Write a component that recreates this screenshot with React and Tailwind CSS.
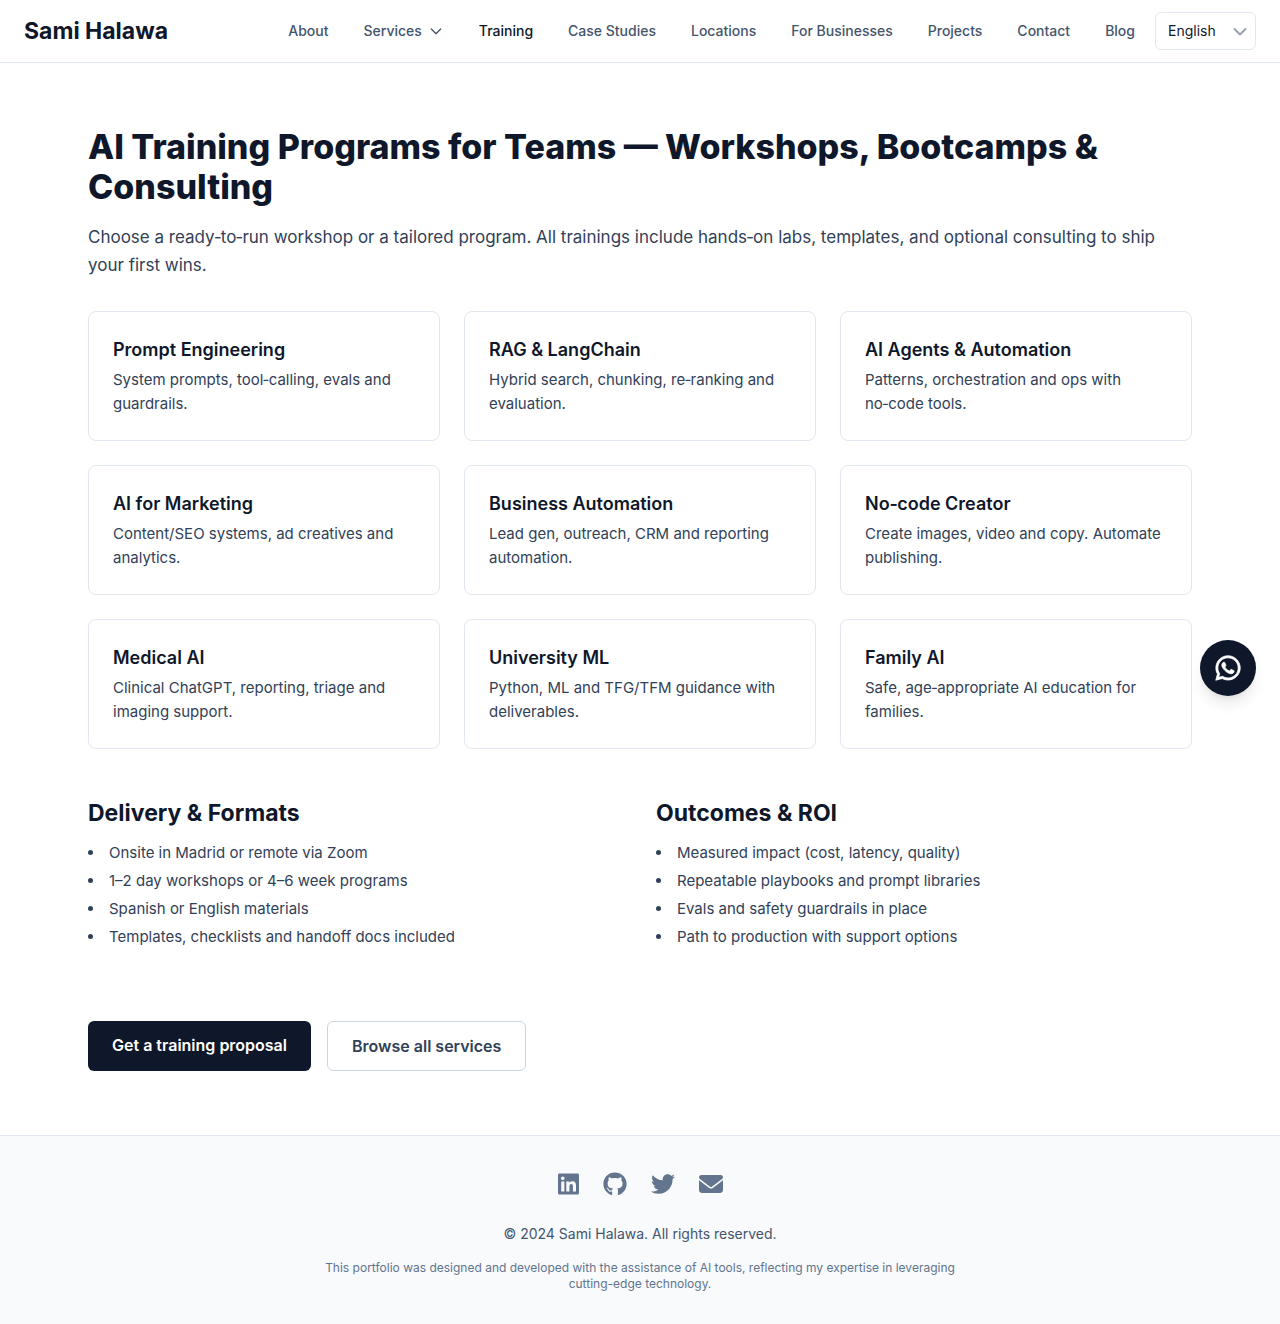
import { FaLinkedin, FaGithub, FaTwitter, FaEnvelope, FaWhatsapp } from "react-icons/fa6";

const links = ["Training", "Case Studies", "Locations", "For Businesses", "Projects", "Contact", "Blog"];

const programs = [
  ["Prompt Engineering", "System prompts, tool‑calling, evals and guardrails."],
  ["RAG & LangChain", "Hybrid search, chunking, re‑ranking and evaluation."],
  ["AI Agents & Automation", "Patterns, orchestration and ops with no‑code tools."],
  ["AI for Marketing", "Content/SEO systems, ad creatives and analytics."],
  ["Business Automation", "Lead gen, outreach, CRM and reporting automation."],
  ["No‑code Creator", "Create images, video and copy. Automate publishing."],
  ["Medical AI", "Clinical ChatGPT, reporting, triage and imaging support."],
  ["University ML", "Python, ML and TFG/TFM guidance with deliverables."],
  ["Family AI", "Safe, age‑appropriate AI education for families."],
];

const lists = [
  {
    title: "Delivery & Formats",
    items: [
      "Onsite in Madrid or remote via Zoom",
      "1–2 day workshops or 4–6 week programs",
      "Spanish or English materials",
      "Templates, checklists and handoff docs included",
    ],
  },
  {
    title: "Outcomes & ROI",
    items: [
      "Measured impact (cost, latency, quality)",
      "Repeatable playbooks and prompt libraries",
      "Evals and safety guardrails in place",
      "Path to production with support options",
    ],
  },
];

const socials = [
  ["LinkedIn", FaLinkedin, "h-6 w-[21px]"],
  ["GitHub", FaGithub, "size-6"],
  ["Twitter", FaTwitter, "size-6"],
  ["Email", FaEnvelope, "size-6"],
];

function Chevron({ className }) {
  return (
    <svg className={className} viewBox="0 0 24 24" fill="none" stroke="currentColor" strokeWidth="2" strokeLinecap="round" strokeLinejoin="round" aria-hidden="true">
      <path d="M19 9l-7 7-7-7" />
    </svg>
  );
}

function Header() {
  return (
    <header className="flex items-center justify-between border-b border-slate-200 bg-white px-6 py-3">
      <a href="#home" className="text-[23px] leading-8 font-bold text-slate-900">Sami Halawa</a>
      <div className="flex items-center gap-5">
        <nav className="flex items-center gap-[35px] text-sm font-medium text-slate-600">
          <a href="#about">About</a>
          <button type="button" className="flex items-center gap-1.5">
            Services
            <Chevron className="size-4" />
          </button>
          {links.map((l) => (
            <a key={l} href={"#" + l.toLowerCase().replace(" ", "-")} className={l === "Training" ? "text-slate-900" : ""}>{l}</a>
          ))}
        </nav>
        <div className="relative">
          <select aria-label="Language" className="h-[38px] w-[101px] appearance-none rounded-md border border-slate-200 bg-white pl-3 text-sm text-slate-900">
            <option>English</option>
            <option>Español</option>
          </select>
          <svg className="pointer-events-none absolute top-2.5 right-1.5 size-5 text-gray-400" viewBox="0 0 20 20" fill="none" stroke="currentColor" strokeWidth="2" strokeLinecap="round" strokeLinejoin="round" aria-hidden="true">
            <path d="M4.500 7l5.500 5.500L15.500 7" />
          </svg>
        </div>
      </div>
    </header>
  );
}

export default function App() {
  return (
    <div className="bg-white font-['Inter',sans-serif] text-slate-900 antialiased">
      <Header />
      <main className="mx-auto max-w-6xl px-6 py-16">
        <h1 className="mb-4 text-[34px] leading-10 font-extrabold">AI Training Programs for Teams — Workshops, Bootcamps &amp; Consulting</h1>
        <p className="mb-8 text-[17px] leading-7 text-slate-700">Choose a ready‑to‑run workshop or a tailored program. All trainings include hands‑on labs, templates, and optional consulting to ship your first wins.</p>
        <div className="grid grid-cols-3 gap-6">
          {programs.map(([title, text]) => (
            <a key={title} href="#program" className="rounded-lg border border-slate-200 p-6">
              <h2 className="mb-1 text-lg font-semibold">{title}</h2>
              <p className="text-[15px] leading-6 text-slate-700">{text}</p>
            </a>
          ))}
        </div>
        <div className="mt-12 grid grid-cols-2 gap-8">
          {lists.map(({ title, items }) => (
            <section key={title}>
              <h2 className="mb-3 text-[23px] leading-8 font-bold">{title}</h2>
              <ul className="list-inside list-disc space-y-1 text-[15px] leading-6 text-slate-700">
                {items.map((i) => <li key={i}>{i}</li>)}
              </ul>
            </section>
          ))}
        </div>
        <div className="mt-[72px] flex gap-4">
          <a href="#proposal" className="rounded-md bg-slate-900 px-6 py-3 font-semibold text-white">Get a training proposal</a>
          <a href="#services" className="rounded-md border border-slate-300 px-6 py-3 font-semibold text-slate-700">Browse all services</a>
        </div>
      </main>
      <footer className="border-t border-slate-200 bg-slate-50 px-6 pt-9 pb-8 text-center">
        <div className="mb-7 flex justify-center gap-6 text-slate-500">
          {socials.map(([label, Icon, size]) => (
            <a key={label} href={"#" + label.toLowerCase()} aria-label={label}><Icon className={size} /></a>
          ))}
        </div>
        <p className="text-sm text-slate-600">© 2024 Sami Halawa. All rights reserved.</p>
        <p className="mx-auto mt-4 max-w-2xl text-xs text-slate-500">This portfolio was designed and developed with the assistance of AI tools, reflecting my expertise in leveraging cutting-edge technology.</p>
      </footer>
      <a href="#whatsapp" aria-label="Chat on WhatsApp" className="fixed top-[640px] right-6 flex size-14 items-center justify-center rounded-full bg-slate-900 text-white shadow-lg">
        <FaWhatsapp className="size-7 overflow-visible stroke-current stroke-[14px]" />
      </a>
    </div>
  );
}
